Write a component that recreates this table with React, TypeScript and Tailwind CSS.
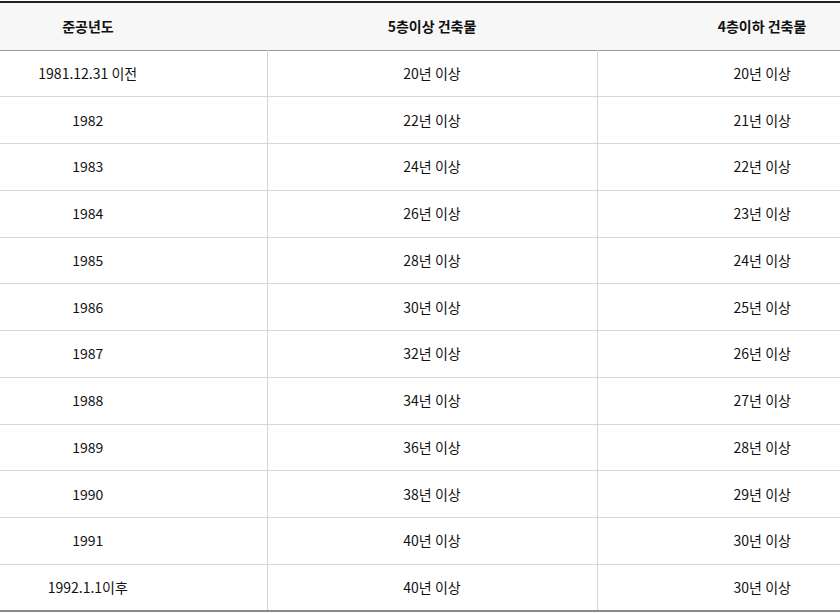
import React from "react";

const rows = [
  ["1981.12.31 이전", "20년 이상", "20년 이상"],
  ["1982", "22년 이상", "21년 이상"],
  ["1983", "24년 이상", "22년 이상"],
  ["1984", "26년 이상", "23년 이상"],
  ["1985", "28년 이상", "24년 이상"],
  ["1986", "30년 이상", "25년 이상"],
  ["1987", "32년 이상", "26년 이상"],
  ["1988", "34년 이상", "27년 이상"],
  ["1989", "36년 이상", "28년 이상"],
  ["1990", "38년 이상", "29년 이상"],
  ["1991", "40년 이상", "30년 이상"],
  ["1992.1.1이후", "40년 이상", "30년 이상"],
];

export default function App() {
  return (
    <div
      className="w-[840px] h-[614px] bg-white pt-px overflow-hidden text-[14px] text-[#111]"
      style={{ fontFamily: '"Noto Sans CJK KR", "Noto Sans", sans-serif' }}
    >
      <table className="w-full border-collapse table-fixed border-t-2 border-[#222]">
        <colgroup>
          <col className="w-[267px]" />
          <col className="w-[330px]" />
          <col />
        </colgroup>
        <thead>
          <tr className="h-[48px] bg-[#f7f7f7] border-b-[1.5px] border-[#999]">
            <th className="pr-[91px] text-center font-bold">준공년도</th>
            <th className="text-center font-bold">5층이상 건축물</th>
            <th className="pl-[87px] text-center font-bold">4층이하 건축물</th>
          </tr>
        </thead>
        <tbody>
          {rows.map((r, i) => (
            <tr
              key={i}
              className={`h-[46.75px] border-b ${
                i === rows.length - 1 ? "border-b-2 border-[#888]" : "border-[#d9d9d9]"
              }`}
            >
              <td className="pr-[91px] text-center">{r[0]}</td>
              <td className="text-center border-l border-[#d5d5d5]">{r[1]}</td>
              <td className="pl-[87px] text-center border-l border-[#d5d5d5]">{r[2]}</td>
            </tr>
          ))}
        </tbody>
      </table>
    </div>
  );
}
